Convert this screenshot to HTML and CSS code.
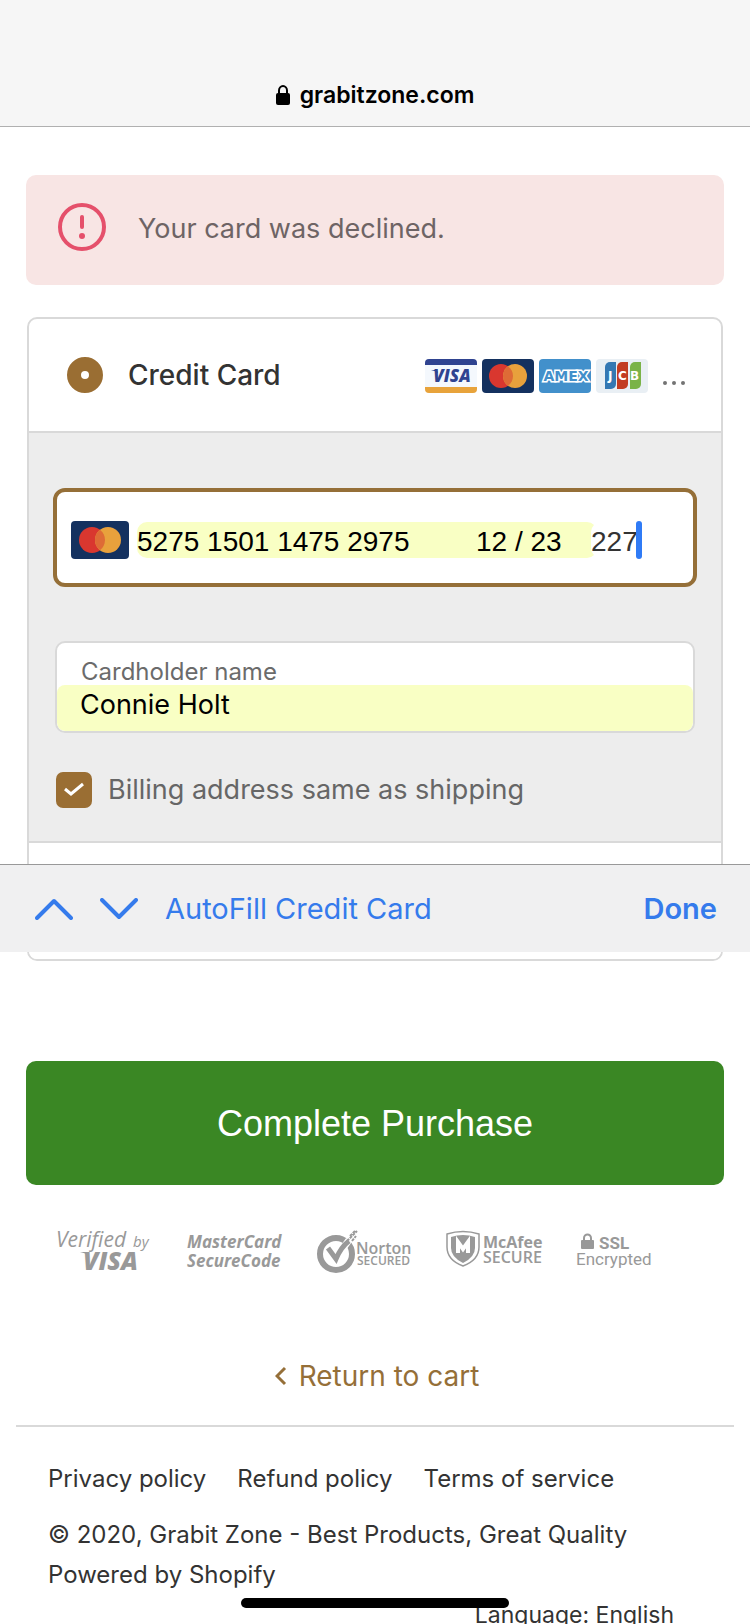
FILE: index.html
```html
<!DOCTYPE html>
<html lang="en">
<head>
<meta charset="utf-8">
<meta name="viewport" content="width=device-width, initial-scale=1">
<title>Checkout - Grabit Zone</title>
<link rel="stylesheet" href="styles.css">
</head>
<body>
<header class="address-bar">
  <svg class="lock" viewBox="0 0 14 20" aria-hidden="true"><rect x="0" y="8" width="14" height="12" rx="2"/><path d="M3 9V5.500a4 4.500 0 0 1 8 0V9" fill="none" stroke="#000" stroke-width="2"/></svg>
  <span>grabitzone.com</span>
</header>

<main class="checkout">
  <div class="alert" role="alert">
    <svg class="alert-icon" viewBox="0 0 48 48" aria-hidden="true"><circle cx="24" cy="24" r="22" fill="none" stroke="#e5506b" stroke-width="4"/><path d="M24 14v10" stroke="#e5506b" stroke-width="4" stroke-linecap="round"/><circle cx="24" cy="33" r="3" fill="#e5506b"/></svg>
    <span class="alert-text">Your card was declined.</span>
  </div>

  <section class="payment">
    <div class="payment-box">
      <div class="method">
        <input class="radio" type="radio" id="cc" name="method" checked>
        <label class="method-label" for="cc">Credit Card</label>
        <div class="brands">
          <svg class="brand" viewBox="0 0 52 34" role="img" aria-label="Visa"><rect width="52" height="34" rx="4" fill="#f4f8fd"/><path d="M0 6V4a4 4 0 0 1 4-4h44a4 4 0 0 1 4 4v2z" fill="#2f4390"/><path d="M0 28v2a4 4 0 0 0 4 4h44a4 4 0 0 0 4-4v-2z" fill="#e8a33b"/><path d="M6 11h6l1 3q-2-2-7-3z" fill="#2f4390"/><text x="27" y="23" class="visa-word" text-anchor="middle">VISA</text></svg>
          <svg class="brand" viewBox="0 0 52 34" role="img" aria-label="Mastercard"><rect width="52" height="34" rx="4" fill="#14315f"/><circle cx="19" cy="17" r="12" fill="#d9372f"/><circle cx="33" cy="17" r="12" fill="#e8a13c"/><path d="M26 7.250a12 12 0 0 1 0 19.500a12 12 0 0 1 0-19.500z" fill="#de6b36"/></svg>
          <svg class="brand" viewBox="0 0 52 34" role="img" aria-label="American Express"><rect width="52" height="34" rx="4" fill="#4290cb"/><text x="27" y="22" class="amex-word" text-anchor="middle">AMEX</text></svg>
          <svg class="brand" viewBox="0 0 52 34" role="img" aria-label="JCB"><rect width="52" height="34" rx="4" fill="#e9eff4"/><path d="M9 8a5 5 0 0 1 5-5h6v22a5 5 0 0 1-5 5H9z" fill="#3478b3"/><path d="M21 8a5 5 0 0 1 5-5h6v22a5 5 0 0 1-5 5h-6z" fill="#c23c22"/><path d="M34 8a5 5 0 0 1 5-5h6v22a5 5 0 0 1-5 5h-6z" fill="#7ab348"/><text y="21" class="jcb-word"><tspan x="12">J</tspan><tspan x="22">C</tspan><tspan x="34">B</tspan></text></svg>
          <svg class="more" viewBox="0 0 22 4" role="img" aria-label="More"><circle cx="2" cy="2" r="2"/><circle cx="11" cy="2" r="2"/><circle cx="20" cy="2" r="2"/></svg>
        </div>
      </div>

      <div class="details">
        <div class="card-field">
          <svg class="card-brand" viewBox="0 0 58 38" aria-hidden="true"><rect width="58" height="38" rx="4" fill="#14315f"/><circle cx="21" cy="19" r="13" fill="#d9372f"/><circle cx="37" cy="19" r="13" fill="#e8a13c"/><path d="M29 8.750a13 13 0 0 1 0 20.500a13 13 0 0 1 0-20.500z" fill="#de6b36"/></svg>
          <div class="filled">
            <input class="card-number" aria-label="Card number" value="5275 1501 1475 2975">
            <input class="card-expiry" aria-label="Expiry date" value="12 / 23">
          </div>
          <input class="card-cvc" aria-label="Security code" value="227">
          <span class="caret"></span>
        </div>

        <div class="name-field">
          <label for="holder">Cardholder name</label>
          <input id="holder" value="Connie Holt">
        </div>

        <div class="same-address">
          <input class="tick" type="checkbox" id="same" checked>
          <label for="same">Billing address same as shipping</label>
        </div>
      </div>

      <div class="next-method"></div>
    </div>

    <div class="autofill-bar">
      <button class="bar-button" aria-label="Previous field"><svg class="chevron" viewBox="0 0 38 22"><path d="M2 20L19 3l17 17"/></svg></button>
      <button class="bar-button" aria-label="Next field"><svg class="chevron" viewBox="0 0 38 22"><path d="M2 2l17 17L36 2"/></svg></button>
      <button class="bar-button">AutoFill Credit Card</button>
      <button class="bar-button done">Done</button>
    </div>
  </section>

  <button class="complete">Complete Purchase</button>

  <div class="badges">
    <svg class="badge" viewBox="0 0 96 44" role="img" aria-label="Verified by Visa"><text x="0" y="18" class="b-verified">Verified</text><text x="77" y="18" class="b-by">by</text><path d="M24 23h8l1 4q-3-3-9-4z" fill="#999"/><text x="27" y="41" class="b-visa">VISA</text></svg>
    <svg class="badge" viewBox="0 0 96 44" role="img" aria-label="MasterCard SecureCode"><text x="1" y="19" class="b-mc">MasterCard</text><text x="1" y="38" class="b-mc">SecureCode</text></svg>
    <svg class="badge" viewBox="0 0 96 44" role="img" aria-label="Norton Secured"><circle cx="20" cy="25" r="16" fill="none" stroke="#999" stroke-width="6"/><path d="M20 29L33 11" fill="none" stroke="#fff" stroke-width="7"/><path d="M12 19l8 11q5-12 13-18" fill="none" stroke="#999" stroke-width="5"/><path d="M31 12l10-10M34 7l5-5M36 12l4-5" stroke="#999" stroke-width="2" stroke-dasharray="3 1"/><text x="40" y="25" class="b-norton">Norton</text><text x="41" y="36" class="b-secured">SECURED</text></svg>
    <svg class="badge" viewBox="0 0 96 44" role="img" aria-label="McAfee Secure"><path d="M1 5q16-5 32 0v13q0 13-16 19Q1 31 1 18z" fill="none" stroke="#999" stroke-width="1.500"/><path d="M5 8q12-4 24 0v11q0 9-12 15Q5 28 5 19z" fill="#999"/><path d="M12 24V13l5 7 5-7v11" fill="none" stroke="#fff" stroke-width="4"/><text x="37" y="19" class="b-mcafee">McAfee</text><text x="37" y="34" class="b-secure">SECURE</text></svg>
    <svg class="badge" viewBox="0 0 96 44" role="img" aria-label="SSL Encrypted"><rect x="5" y="11" width="13" height="9" rx="1" fill="#999"/><path d="M8 12V9a3.500 3.500 0 0 1 7 0v3" fill="none" stroke="#999" stroke-width="2"/><text x="23" y="20" class="b-ssl">SSL</text><text x="0" y="36" class="b-enc">Encrypted</text></svg>
  </div>

  <a class="return" href="#cart"><svg class="back" viewBox="0 0 12 20" aria-hidden="true"><path d="M10 2L2 10l8 8"/></svg>Return to cart</a>
</main>

<footer class="footer">
  <nav class="policies">
    <a href="#privacy">Privacy policy</a>
    <a href="#refund">Refund policy</a>
    <a href="#terms">Terms of service</a>
  </nav>
  <p class="copyright">© 2020, Grabit Zone - Best Products, Great Quality<br>Powered by Shopify</p>
  <p class="language">Language: English</p>
</footer>
<div class="home-indicator"></div>
</body>
</html>
```

FILE: styles.css
```css
* { box-sizing: border-box; }
body {
  margin: 0;
  height: 100vh;
  overflow: hidden;
  background: #fff;
  color: #333;
  font-family: Inter, "Noto Sans", sans-serif;
  font-size: 27px;
}
input, button { font: inherit; margin: 0; padding: 0; border: 0; background: none; min-width: 0; }
svg { display: block; flex: none; }
a { color: inherit; text-decoration: none; }
p { margin: 0; }

.address-bar {
  display: flex;
  justify-content: center;
  align-items: center;
  gap: 10px;
  padding: 80px 0 16px;
  background: #f6f6f6;
  border-bottom: 1px solid #b0b0b0;
  color: #000;
  font-size: 23px;
  font-weight: 600;
  line-height: 30px;
}
.lock { width: 14px; height: 20px; }

.alert {
  display: flex;
  align-items: center;
  gap: 32px;
  margin: 48px 26px 32px;
  padding: 28px 32px 34px;
  border-radius: 10px;
  background: #f8e5e4;
  color: #6e6465;
}
.alert-icon { width: 48px; height: 48px; }
.alert-text { padding-top: 4px; line-height: 44px; }

.payment { position: relative; padding: 0 27px; }
.payment-box { border: 2px solid #d9d9d9; border-radius: 10px; overflow: hidden; }
.method {
  display: flex;
  align-items: center;
  padding: 37px 36px 37px 38px;
  border-bottom: 2px solid #d9d9d9;
  line-height: 38px;
}
.radio {
  appearance: none;
  width: 36px;
  height: 36px;
  border: 14px solid #9a6e33;
  border-radius: 50%;
  background: #fff;
}
.method-label { margin-left: 25px; font-size: 28px; font-weight: 500; }
.brands { display: flex; gap: 5px; margin-left: auto; padding-top: 2px; }
.brand { width: 52px; height: 34px; }
.more { width: 22px; height: 4px; margin: 22px 0 0 10px; fill: #737373; }
.visa-word { font: italic 800 17px "Open Sans", sans-serif; fill: #2f4390; }
.amex-word {
  font: bold 14px "DejaVu Sans", sans-serif;
  fill: #4290cb;
  stroke: #fff;
  stroke-width: 3px;
  paint-order: stroke;
}
.jcb-word { font: bold 12px "DejaVu Sans", sans-serif; fill: #fff; }

.details { padding: 55px 24px 33px; background: #ededed; border-bottom: 2px solid #d9d9d9; }
.card-field {
  display: flex;
  align-items: center;
  gap: 8px;
  padding: 29px 14px 24px;
  border: 4px solid #956f38;
  border-radius: 12px;
  background: #fff;
  font-family: "Liberation Sans", sans-serif;
  font-size: 28px;
}
.card-brand { width: 58px; height: 38px; }
.filled { display: flex; width: 460px; background: #f9ffc4; border-radius: 10px; }
.card-field input { height: 36px; padding-top: 3px; }
.filled input { color: #000; }
.card-number { width: 339px; }
.card-expiry { width: 100px; }
.card-field .card-cvc { width: 46px; margin-left: -14px; color: #333; background: #fff; border-radius: 10px; }
.caret { width: 6px; height: 38px; margin-left: -9px; border-radius: 3px; background: #2f7bf6; }

.name-field {
  display: flex;
  flex-direction: column;
  margin: 54px 2px 39px;
  border: 2px solid #d9d9d9;
  border-radius: 10px;
  background: #fff;
  overflow: hidden;
}
.name-field label { padding: 16px 24px 0; color: #6b6b6b; font-size: 24px; line-height: 26px; }
.name-field input { height: 46px; padding: 0 23px 8px; border-radius: 8px; background: #f9ffc4; color: #000; }

.same-address { display: flex; align-items: center; gap: 16px; padding: 0 3px; color: #666; line-height: 36px; }
.tick {
  appearance: none;
  width: 36px;
  height: 36px;
  border-radius: 7px;
  background: #9a6e33 url("data:image/svg+xml,%3Csvg xmlns='http://www.w3.org/2000/svg' viewBox='0 0 36 36'%3E%3Cpath d='M9 17l6 5L27 12' fill='none' stroke='white' stroke-width='3'/%3E%3C/svg%3E");
}
.next-method { height: 116px; background: #fff; }

.autofill-bar {
  position: absolute;
  left: 0;
  right: 0;
  bottom: 9px;
  display: flex;
  align-items: center;
  gap: 27px;
  height: 88px;
  padding: 0 33px 0 35px;
  background: #f0f0f1;
  border-top: 1px solid #999;
  font-size: 29px;
}
.bar-button { color: #357bec; }
.chevron { width: 38px; height: 22px; fill: none; stroke: #357bec; stroke-width: 4; stroke-linecap: round; stroke-linejoin: round; }
.done { margin-left: auto; font-weight: 600; }

.complete {
  display: block;
  width: calc(100% - 52px);
  margin: 100px 26px 44px;
  padding: 41px 0 39px;
  border-radius: 10px;
  background: #3a8724;
  color: #fff;
  font-family: "Liberation Sans", sans-serif;
  font-size: 36px;
  line-height: 44px;
}

.badges { display: flex; gap: 34px; padding: 0 56px; }
.badge { width: 96px; height: 44px; overflow: visible; }
.badge text { fill: #999; }
.b-verified { font: italic 21px "Open Sans", sans-serif; }
.b-by { font: italic 15px "Open Sans", sans-serif; }
.b-visa { font: italic 800 25px "Open Sans", sans-serif; }
.b-mc { font: italic 700 17px "Open Sans", sans-serif; }
.b-norton { font: 600 16px "Open Sans", sans-serif; }
.b-secured { font: 600 12px "Open Sans", sans-serif; }
.b-mcafee { font: 700 16px "Open Sans", sans-serif; }
.b-secure { font: 600 16px "Open Sans", sans-serif; }
.b-ssl { font: 700 17px Roboto, sans-serif; }
.b-enc { font: 17px Roboto, sans-serif; }

.return {
  display: flex;
  justify-content: center;
  align-items: center;
  gap: 12px;
  margin: 84px 0 30px;
  padding-left: 4px;
  color: #956f38;
  font-size: 28px;
  line-height: 38px;
}
.back { width: 12px; height: 20px; fill: none; stroke: #956f38; stroke-width: 3; }

.footer {
  margin: 0 16px;
  padding: 32px;
  border-top: 2px solid #d9d9d9;
  font-size: 24px;
  line-height: 40px;
}
.policies { display: flex; gap: 31px; margin-bottom: 16px; }
.language { padding-right: 28px; font-size: 23px; text-align: right; }
.home-indicator {
  position: fixed;
  left: 50%;
  bottom: 16px;
  width: 268px;
  height: 10px;
  margin-left: -134px;
  border-radius: 5px;
  background: #000;
}
```
